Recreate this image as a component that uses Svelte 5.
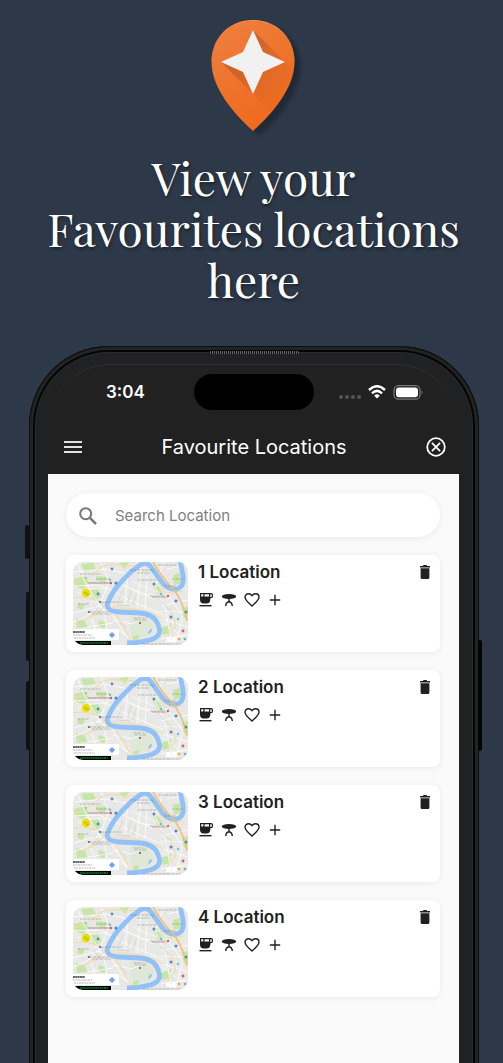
<script>
  const locations = ['1 Location', '2 Location', '3 Location', '4 Location'];
  let query = $state('');
</script>

<main>
  <section class="hero">
    <svg class="pin" viewBox="0 0 100 120" aria-hidden="true">
      <defs>
        <linearGradient id="pin-fill" x1="0" y1="0" x2="0.5" y2="1">
          <stop offset="0" stop-color="#ed8040" />
          <stop offset="1" stop-color="#f06a1e" />
        </linearGradient>
        <linearGradient id="star-shade" x1="0.3" y1="0.3" x2="0.8" y2="0.8">
          <stop offset="0" stop-color="#b0501f" stop-opacity=".5" />
          <stop offset="1" stop-color="#c95a20" stop-opacity="0" />
        </linearGradient>
        <clipPath id="pin-clip">
          <path d="M50 4C26 4 8.500 22 8.500 46C8.500 72 31 98 50 115C69 98 91.500 72 91.500 46C91.500 22 74 4 50 4Z" />
        </clipPath>
        <filter id="soft" x="-20%" y="-20%" width="150%" height="150%">
          <feGaussianBlur stdDeviation="1.500" />
        </filter>
      </defs>
      <path d="M50 4C26 4 8.500 22 8.500 46C8.500 72 31 98 50 115C69 98 91.500 72 91.500 46C91.500 22 74 4 50 4Z" transform="translate(6 5)" fill="#1d2530" opacity=".75" filter="url(#soft)" />
      <path d="M50 4C26 4 8.500 22 8.500 46C8.500 72 31 98 50 115C69 98 91.500 72 91.500 46C91.500 22 74 4 50 4Z" fill="url(#pin-fill)" />
      <g clip-path="url(#pin-clip)">
        <path d="M50 14L90 54L90 118L50 78L60 88L18 46L50 46Z" fill="url(#star-shade)" />
        <path d="M8 46C8 22 26 4.500 50 4.500S92 22 92 46" fill="none" stroke="#f5a06e" stroke-width=".6" />
      </g>
      <path d="M50 14L60 36L82 46L60 56L50 78L40 56L18 46L40 36Z" fill="#f1f1f1" />
    </svg>
    <h1>View your<br />Favourites locations<br />here</h1>
  </section>

  <div class="phone">
    <span class="side mute"></span>
    <span class="side up"></span>
    <span class="side down"></span>
    <span class="side power"></span>
    <span class="speaker"></span>

    <div class="screen">
      <header>
        <div class="status">
          <span class="time">3:04</span>
          <span class="island"></span>
          <span class="signals">
            <svg width="22" height="6" viewBox="0 0 22 6" fill="#555"><circle cx="2" cy="3" r="2" /><circle cx="8" cy="3" r="2" /><circle cx="14" cy="3" r="2" /><circle cx="20" cy="3" r="2" /></svg>
            <svg class="wifi" width="18" height="14" viewBox="0 0 18 14" fill="none" stroke="#fff" stroke-width="2.500"><path d="M1 5Q9-2.500 17 5M4 8.300Q9 3.500 14 8.300" /><path d="M6.200 10.700Q9 8 11.800 10.700L9 13.500Z" fill="#fff" stroke="none" /></svg>
            <svg width="30" height="15" viewBox="0 0 30 15"><rect x="1" y=".7" width="26" height="13.500" rx="4.500" fill="none" stroke="#777" stroke-width="1.300" /><rect x="3" y="2.600" width="22" height="9.700" rx="3" fill="#fff" /><path d="M28.500 5.300Q30.500 7.500 28.500 9.700Z" fill="#777" /></svg>
          </span>
        </div>
        <div class="bar">
          <button aria-label="Menu"><svg width="18" height="14" viewBox="0 0 18 14" stroke="#e2e2de" stroke-width="2"><path d="M0 2H18M0 7H18M0 12H18" /></svg></button>
          <h2>Favourite Locations</h2>
          <button aria-label="Close"><svg width="20" height="20" viewBox="0 0 20 20" fill="none" stroke="#fff" stroke-width="1.800"><circle cx="10" cy="10" r="8.800" /><path d="M5.900 5.900L14.100 14.100M14.100 5.900L5.900 14.100" /></svg></button>
        </div>
      </header>

      <div class="content">
        <label class="search">
          <svg width="18" height="18" viewBox="0 0 18 18" fill="none" stroke="#777" stroke-width="2"><circle cx="6.700" cy="6.700" r="5.500" /><path d="M10.900 10.900L17 17" stroke-width="2.500" /></svg>
          <input type="text" placeholder="Search Location" aria-label="Search Location" bind:value={query} />
        </label>

        <ul>
          {#each locations as name}
            <li>
              {@render map()}
              <div class="details">
                <h3>{name}</h3>
                <div class="tags">
                  <button aria-label="Cafe"><svg width="16" height="16" viewBox="0 0 16 16" fill="#212121"><path fill-rule="evenodd" d="M2 1H13.200Q15 1 15 2.800V4.200Q15 6.200 13 6.200H12.300V7.500Q12.300 11.500 8.500 11.500H5.800Q2 11.500 2 7.500ZM3.200 2.200V4.600H5L5.600 2.200ZM6.800 2.200L6.300 4.600H11V2.200ZM12.300 2.200V5H12.900Q13.800 5 13.800 4.100V2.900Q13.800 2.200 13.200 2.200Z" /><path d="M1.500 13H13.500V14.400H1.500Z" /></svg></button>
                  <button aria-label="Table"><svg width="16" height="16" viewBox="0 0 16 16"><ellipse cx="8" cy="4.500" rx="7.200" ry="2.600" fill="#212121" /><path d="M8 6V9.500M4.700 14Q4.900 10.300 8 9.800Q11.100 10.300 11.300 14" fill="none" stroke="#212121" stroke-width="1.400" /></svg></button>
                  <button aria-label="Favourite"><svg width="16" height="16" viewBox="0 0 16 16" fill="none" stroke="#212121" stroke-width="1.400"><path d="M8 14L6.900 13C3.200 9.700 1 7.700 1 5.200C1 3.200 2.600 1.700 4.500 1.700C5.900 1.700 7.200 2.400 8 3.600C8.800 2.400 10.100 1.700 11.500 1.700C13.400 1.700 15 3.200 15 5.200C15 7.700 12.800 9.700 9.100 13Z" /></svg></button>
                  <button aria-label="Add"><svg width="16" height="16" viewBox="0 0 16 16" stroke="#212121" stroke-width="1.400"><path d="M8 2.800V13.200M2.800 8H13.200" /></svg></button>
                </div>
              </div>
              <button class="delete" aria-label="Delete {name}"><svg width="10" height="14" viewBox="0 0 10 14" fill="#212121"><path d="M0 1H2.800L3.500 0H6.500L7.200 1H10V2.400H0ZM.6 3.200H9.400V12.400Q9.400 14 7.900 14H2.100Q.6 14 .6 12.400Z" /></svg></button>
            </li>
          {/each}
        </ul>
      </div>
    </div>
  </div>
</main>

{#snippet map()}
  <svg class="map" viewBox="0 0 115 83" aria-hidden="true" fill="none">
    <path fill="#e8e8e6" d="M0 0H115V83H0Z" />
    <g fill="#c6e5a6">
      <path d="M1 17L12 14L16 21L10 27L2 24ZM8 2L20 1L23 7L12 10ZM17 28L25 27L29 34L21 39ZM23 14L34 15L31 21L24 19ZM5 41L12 43L9 48L4 46ZM3 56L12 59L14 65L4 66ZM26 58L34 61L31 66L25 64ZM100 13L107 11L108 21L101 23ZM88 66L98 62L97 71L90 73ZM109 46L115 44V57L110 55ZM79 21L87 26L91 36L85 34ZM46 1L56 0L52 7ZM60 74L67 73L65 78L59 78Z" />
    </g>
    <path fill="#d8e6cd" d="M57 54L75 57L82 66L75 75L58 72Z" opacity=".6" />
    <g stroke="#fff" stroke-width=".8">
      <path d="M0 10L32 7L56 12M0 24L26 23L48 33M4 0L12 20L31 50L34 67M0 51L26 44L40 54L54 75M28 0L36 20L27 42L13 55L0 60M40 58L59 62L72 55M44 20L69 32L97 35M55 12L52 43M68 6L64 46M74 14L72 47M91 0L82 24L92 45L99 83M88 44L115 38M83 55L115 65M92 30L110 54L102 83M47 34L72 45L91 53M18 56L23 68M15 65L40 61M45 68L64 81M88 77L115 73M94 7L108 4" />
      <path d="M5 31L19 27L34 26M18 40L37 38M60 20L84 30M58 26L81 37M87 49L111 50M89 60L110 75" stroke-width=".6" />
    </g>
    <g stroke="#cfcfcf" stroke-width=".8"><path d="M50 28L46 38M58 29L55 39M63 33L60 43M47 59L54 66M88 39L96 48M43 43L57 44M20 43L28 52" /></g>
    <g stroke="#f4dca6" stroke-width="1.100"><path d="M0 22Q18 16 25 8T51 4L72 3M0 36Q17 33 31 42L44 46Q60 45 79 52L90 57M10 58L24 52L33 42M61 83L49 63L41 49M80 10L92 31L110 29M97 46L103 63L92 78" /></g>
    <g stroke="#92c1f7" stroke-width="4.800" stroke-linejoin="round">
      <path d="M54 81Q66 81 77 78Q89 74 86 66Q83 52 67 51L47 50Q31 49 35 40Q40 28 50 18Q58 9 67 3Q74-1 78 5L86 16Q94 29 104 27Q112 24 110 13L107 -2" />
    </g>
    <path d="M80 0Q90 17 102 29Q111 43 114 59" stroke="#f3bd70" stroke-width="1.500" />
    <path d="M75 72Q76 67 79 67Q79 71 75 72Z" fill="#92c1f7" />
    <g stroke="#777" stroke-width=".7" stroke-dasharray="2 .5 1 .5">
      <path d="M7 12H28M23 17H38M15 21H38M28 40H49M17 50H37M19 52H39M57 8H79M64 11H77M85 3H104M65 18H84M91 24H103M77 34H93M61 56H74M62 58H73M70 82H108M5 42H16M99 17H110" opacity=".65" />
    </g>
    <g fill="#5488d2"><circle cx="39" cy="7" r="1.400" /><circle cx="43" cy="21" r="1.600" /><circle cx="25" cy="32" r="1.400" /><circle cx="27" cy="40" r="1.200" /><circle cx="81" cy="22" r="1.500" /><circle cx="103" cy="39" r="1.600" /><circle cx="98" cy="55" r="1.500" /><circle cx="113" cy="50" r="1.500" /></g>
    <g fill="#5ac9df"><circle cx="37" cy="18" r="1.200" /><circle cx="80" cy="9" r="1.200" /><circle cx="13" cy="16" r=".9" /><circle cx="88" cy="32" r="1.200" /><circle cx="105" cy="57" r="1.200" /></g>
    <g fill="#dc5f5c"><circle cx="38" cy="21" r="1.200" /><circle cx="95" cy="34" r="1.200" /><circle cx="110" cy="69" r="1.400" /></g>
    <path d="M16 21H37M79 35H94" stroke="#b9737a" stroke-width=".7" stroke-dasharray="2 .5" />
    <circle cx="16" cy="50" r="1" fill="#76594b" /><circle cx="67" cy="61" r="1" fill="#76594b" />
    <circle cx="13" cy="31" r="4.200" fill="#eadf00" />
    <path d="M11 31L13 30L14 33L16 32" stroke="#a49d19" stroke-width=".7" />
    <path fill="#fff" d="M0 67H46V78H0Z" />
    <path d="M0 70H12" stroke="#333" stroke-width="1.300" stroke-dasharray="2 .3" />
    <path d="M0 73H19M1 76H22" stroke="#999" stroke-width=".7" stroke-dasharray="2 .5" />
    <path d="M39 70.500L41.500 73L39 75.500L36.500 73Z" fill="#699df7" stroke="#699df7" stroke-width="1" />
    <path fill="#000" d="M0 79H38V83H0Z" />
    <path d="M7 81H35" stroke="#147d2a" stroke-width="1.400" stroke-dasharray="1.500 .5 2 .4" />
    <path d="M93 75H98V80H93ZM99 75H103V80H99Z" fill="#fff" /><circle cx="106" cy="77" r="1.300" fill="#e9ac31" /><circle cx="112" cy="77" r="1.300" fill="#7fa7dc" />
  </svg>
{/snippet}

<style>
  :global(body) { margin: 0; background: #2d3848; }
  * { box-sizing: border-box; }
  main {
    height: 100vh;
    display: flex;
    flex-direction: column;
    overflow: hidden;
    background: #2d3848;
    font-family: Inter, "Liberation Sans", sans-serif;
  }
  svg { display: block; flex: none; }
  h1, h2, h3, ul { margin: 0; padding: 0; }
  button { display: flex; padding: 0; border: 0; background: none; }
  .hero { flex: none; display: flex; flex-direction: column; align-items: center; padding: 16px 0 41px; }
  .pin { width: 100px; height: 120px; margin-left: 3px; overflow: visible; }
  h1 {
    margin-top: 16px;
    padding-left: 4px;
    color: #fff;
    font: 400 46px/51px "Playfair Display", "Liberation Serif", serif;
    text-align: center;
    text-shadow: 1px 2px 3px #1a202c;
    white-space: nowrap;
  }
  .phone {
    position: relative;
    flex: 1 0 auto;
    margin: 0 24px -10px 29px;
    padding: 18px 20px 0 19px;
    border-radius: 80px 80px 0 0;
    background: #202122;
    box-shadow: inset 0 0 0 1px #0c0d0d, inset 0 0 0 4px #222424, inset 0 0 0 6px #050505, inset 0 0 0 7px #2a2b2c;
  }
  .side { position: absolute; width: 4px; background: #101112; border-radius: 2px; }
  .mute { left: -4px; top: 179px; height: 34px; }
  .up { left: -3px; top: 246px; height: 69px; }
  .down { left: -3px; top: 335px; height: 69px; }
  .power { right: -3px; top: 294px; height: 111px; background: #050505; }
  .speaker {
    position: absolute;
    top: 5px;
    left: 50%;
    width: 90px;
    height: 3px;
    transform: translateX(-50%);
    border-radius: 2px;
    background: repeating-linear-gradient(90deg, #111 0 1px, #666 1px 2px);
  }
  .screen {
    height: 100%;
    border-radius: 62px 62px 0 0;
    overflow: hidden;
    background: linear-gradient(#212121 100px, #fafafa 100px);
  }
  header { background: #212121; border-radius: 62px 62px 0 0; box-shadow: inset 0 1px 0 #303333; color: #fff; }
  .status { display: grid; grid-template-columns: 1fr 120px 1fr; align-items: center; height: 56px; }
  .time { padding-left: 58px; font-size: 17px; font-weight: 600; }
  .island { height: 36px; border-radius: 18px; background: #000; }
  .signals { display: flex; align-items: center; justify-content: flex-end; gap: 7px; padding-right: 36px; }
  .signals svg:first-child { margin-top: 9px; }
  .bar { display: flex; align-items: center; justify-content: space-between; height: 54px; padding: 0 13px 0 16px; }
  h2 { font-size: 20px; font-weight: 400; line-height: 24px; }
  .content { padding: 19px 19px 0 18px; }
  .search {
    display: flex;
    align-items: center;
    gap: 18px;
    height: 44px;
    padding: 2px 13px 0;
    border-radius: 22px;
    background: #fff;
    box-shadow: 0 1px 6px #00000012;
  }
  input { flex: 1; min-width: 0; padding: 0; border: 0; outline: 0; background: none; color: #222; font: 400 15px/20px Inter, sans-serif; }
  input::placeholder { color: #808080; opacity: 1; }
  ul { display: grid; gap: 18px; margin-top: 18px; list-style: none; }
  li {
    display: flex;
    align-items: flex-start;
    height: 97px;
    padding: 7px 10px 7px 7px;
    border-radius: 8px;
    background: #fff;
    box-shadow: 0 1px 6px #00000012;
  }
  .map { width: 115px; height: 83px; border-radius: 10px; overflow: hidden; }
  .details { flex: 1; padding-left: 10px; }
  h3 { color: #212121; font-size: 17px; font-weight: 600; line-height: 20px; }
  .tags { display: flex; gap: 7px; margin-top: 10px; }
  .delete { margin-top: 3px; }
</style>
